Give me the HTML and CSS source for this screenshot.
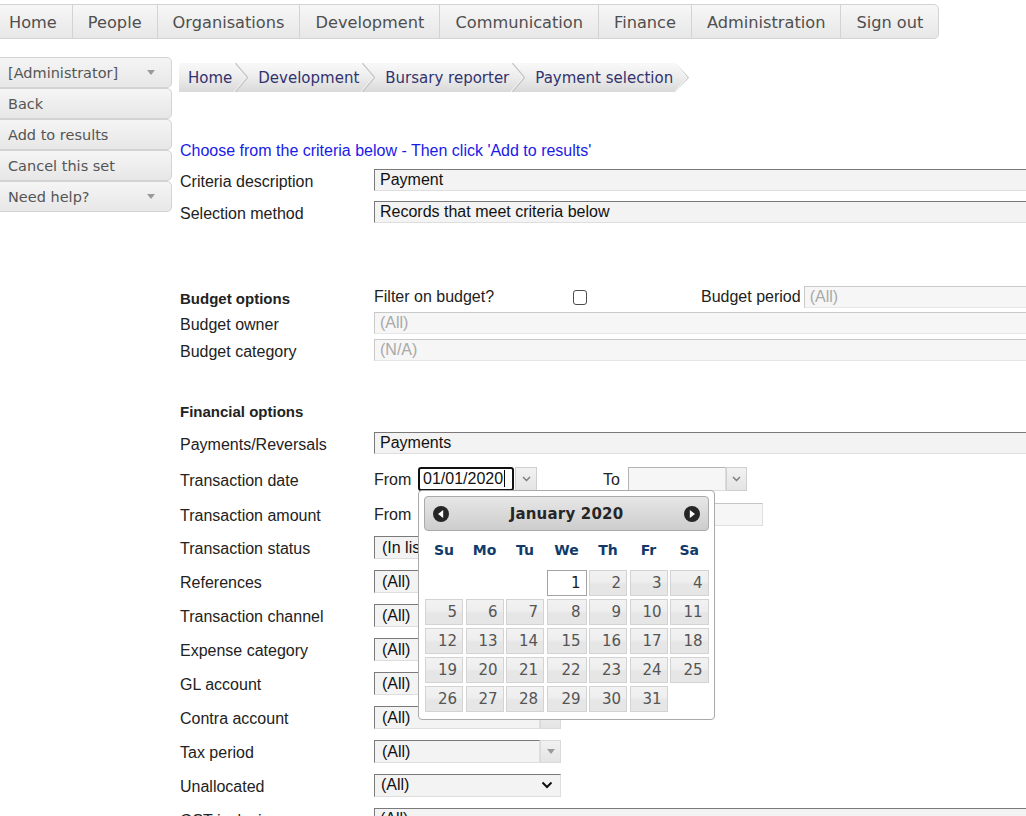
FILE: index.html
```html
<!DOCTYPE html>
<html lang="en">
<head>
<meta charset="utf-8">
<title>Payment selection</title>
<link rel="stylesheet" href="styles.css">
</head>
<body>
<nav class="topnav">
  <span class="nav-item">Home</span>
  <span class="nav-item">People</span>
  <span class="nav-item">Organisations</span>
  <span class="nav-item">Development</span>
  <span class="nav-item">Communication</span>
  <span class="nav-item">Finance</span>
  <span class="nav-item">Administration</span>
  <span class="nav-item">Sign out</span>
</nav>

<div class="page">
  <aside class="sidebar">
    <div class="side-item">[Administrator]<span class="caret"></span></div>
    <div class="side-item">Back</div>
    <div class="side-item">Add to results</div>
    <div class="side-item">Cancel this set</div>
    <div class="side-item">Need help?<span class="caret"></span></div>
  </aside>

  <main class="main">
    <div class="crumbs">
      <span class="crumb first">Home</span>
      <svg class="sep" viewBox="0 0 14 29" width="14" height="29"><polyline class="sep-light" points="0.2,0 12.7,14.5 0.2,29"/><polyline class="sep-dark" points="1.2,0 13.5,14.5 1.2,29"/></svg>
      <span class="crumb">Development</span>
      <svg class="sep" viewBox="0 0 14 29" width="14" height="29"><polyline class="sep-light" points="0.2,0 12.7,14.5 0.2,29"/><polyline class="sep-dark" points="1.2,0 13.5,14.5 1.2,29"/></svg>
      <span class="crumb">Bursary reporter</span>
      <svg class="sep" viewBox="0 0 14 29" width="14" height="29"><polyline class="sep-light" points="0.2,0 12.7,14.5 0.2,29"/><polyline class="sep-dark" points="1.2,0 13.5,14.5 1.2,29"/></svg>
      <span class="crumb">Payment selection</span>
      <svg class="sep" viewBox="0 0 14 29" width="14" height="29"><polyline class="sep-light" points="0.2,0 12.7,14.5 0.2,29"/><polyline class="sep-dark" points="1.2,0 13.5,14.5 1.2,29"/></svg>
    </div>

    <p class="intro">Choose from the criteria below - Then click 'Add to results'</p>

    <div class="form">
      <div class="row h32">
        <span class="lbl">Criteria description</span>
        <div class="field wide">Payment</div>
      </div>
      <div class="row h32">
        <span class="lbl">Selection method</span>
        <div class="field wide">Records that meet criteria below</div>
      </div>

      <div class="row h26 budget-first">
        <span class="lbl bold">Budget options</span>
        <span class="filter-text">Filter on budget?</span>
        <span class="checkbox"></span>
        <span class="period-text">Budget period</span>
        <div class="field disabled period-field">(All)</div>
      </div>
      <div class="row h26">
        <span class="lbl">Budget owner</span>
        <div class="field disabled wide">(All)</div>
      </div>
      <div class="row h28">
        <span class="lbl">Budget category</span>
        <div class="field disabled wide">(N/A)</div>
      </div>

      <div class="row h28 fin-head">
        <span class="lbl bold">Financial options</span>
      </div>
      <div class="row h34 pay-row">
        <span class="lbl">Payments/Reversals</span>
        <div class="field wide">Payments</div>
      </div>

      <div class="row h38">
        <span class="lbl">Transaction date</span>
        <span class="from">From</span>
        <div class="date-wrap">
          <div class="date-input focused">01/01/2020<span class="caret-line"></span></div>
          <span class="date-btn"><svg width="9" height="6" viewBox="0 0 9 6"><polyline points="1,1 4.5,4.5 8,1" fill="none" stroke="#7a7a7a" stroke-width="1.4"/></svg></span>

          <div class="calendar">
            <div class="cal-head">
              <svg class="cal-nav" width="16" height="16" viewBox="0 0 16 16"><circle cx="8" cy="8" r="8" fill="#262626"/><polygon points="10.2,4 5,8 10.2,12" fill="#fff"/></svg>
              <span class="cal-title">January 2020</span>
              <svg class="cal-nav" width="16" height="16" viewBox="0 0 16 16"><circle cx="8" cy="8" r="8" fill="#262626"/><polygon points="5.8,4 11,8 5.8,12" fill="#fff"/></svg>
            </div>
            <div class="cal-dow">
              <span>Su</span><span>Mo</span><span>Tu</span><span>We</span><span>Th</span><span>Fr</span><span>Sa</span>
            </div>
            <div class="cal-grid">
              <span class="blank"></span><span class="blank"></span><span class="blank"></span>
              <span class="day today">1</span><span class="day">2</span><span class="day">3</span><span class="day">4</span>
              <span class="day">5</span><span class="day">6</span><span class="day">7</span><span class="day">8</span><span class="day">9</span><span class="day">10</span><span class="day">11</span>
              <span class="day">12</span><span class="day">13</span><span class="day">14</span><span class="day">15</span><span class="day">16</span><span class="day">17</span><span class="day">18</span>
              <span class="day">19</span><span class="day">20</span><span class="day">21</span><span class="day">22</span><span class="day">23</span><span class="day">24</span><span class="day">25</span>
              <span class="day">26</span><span class="day">27</span><span class="day">28</span><span class="day">29</span><span class="day">30</span><span class="day">31</span>
            </div>
          </div>
        </div>
        <span class="to">To</span>
        <div class="date-input plain"></div>
        <span class="date-btn"><svg width="9" height="6" viewBox="0 0 9 6"><polyline points="1,1 4.5,4.5 8,1" fill="none" stroke="#7a7a7a" stroke-width="1.4"/></svg></span>
      </div>

      <div class="row h32">
        <span class="lbl">Transaction amount</span>
        <span class="from">From</span>
        <div class="amount-input"></div>
        <div class="amount-input to-input"></div>
      </div>

      <div class="row h34">
        <span class="lbl">Transaction status</span>
        <div class="combo"><div class="field cfield">(In list)</div><span class="combo-btn"><span class="tri"></span></span></div>
      </div>
      <div class="row h34">
        <span class="lbl">References</span>
        <div class="combo"><div class="field cfield">(All)</div><span class="combo-btn"><span class="tri"></span></span></div>
      </div>
      <div class="row h34">
        <span class="lbl">Transaction channel</span>
        <div class="combo"><div class="field cfield">(All)</div><span class="combo-btn"><span class="tri"></span></span></div>
      </div>
      <div class="row h34">
        <span class="lbl">Expense category</span>
        <div class="combo"><div class="field cfield">(All)</div><span class="combo-btn"><span class="tri"></span></span></div>
      </div>
      <div class="row h34">
        <span class="lbl">GL account</span>
        <div class="combo"><div class="field cfield">(All)</div><span class="combo-btn"><span class="tri"></span></span></div>
      </div>
      <div class="row h34">
        <span class="lbl">Contra account</span>
        <div class="combo"><div class="field cfield">(All)</div><span class="combo-btn"><span class="tri"></span></span></div>
      </div>
      <div class="row h34">
        <span class="lbl">Tax period</span>
        <div class="combo"><div class="field cfield">(All)</div><span class="combo-btn"><span class="tri"></span></span></div>
      </div>
      <div class="row h34">
        <span class="lbl">Unallocated</span>
        <div class="select">(All)<svg width="12" height="8" viewBox="0 0 12 8"><polyline points="1.5,1.5 6,6 10.5,1.5" fill="none" stroke="#111" stroke-width="2"/></svg></div>
      </div>
      <div class="row h34">
        <span class="lbl">GST inclusive</span>
        <div class="field wide">(All)</div>
      </div>
    </div>
  </main>
</div>
</body>
</html>
```

FILE: styles.css
```css
html, body {
  margin: 0;
  padding: 0;
  overflow: hidden;
  background: #fff;
}

body {
  font-family: "Liberation Sans", Arial, sans-serif;
  font-size: 16px;
  color: #222;
}

/* ---------- top navigation ---------- */
.topnav {
  display: flex;
  width: max-content;
  margin: 4px 0 0 -7px;
  border: 1px solid #d3d3d3;
  border-radius: 0 5px 5px 0;
  background: linear-gradient(#f7f7f7 0%, #efefef 50%, #e7e7e7 100%);
  font-family: "DejaVu Sans", Verdana, sans-serif;
  font-size: 16.2px;
  color: #4f4f4f;
}

.nav-item {
  box-sizing: border-box;
  height: 33px;
  padding: 2px 15px 0;
  line-height: 31px;
  border-right: 1px solid #d3d3d3;
}

.nav-item:last-child {
  border-right: 0;
}

/* ---------- page ---------- */
.page {
  display: flex;
  align-items: flex-start;
  margin-top: 18px;
}

.sidebar {
  flex: none;
  width: 173px;
  margin-left: -1px;
  font-family: "DejaVu Sans", Verdana, sans-serif;
  font-size: 14.5px;
  color: #555;
}

.side-item {
  display: flex;
  align-items: center;
  justify-content: space-between;
  height: 29px;
  padding: 0 16px 0 8px;
  border: 1px solid #d3d3d3;
  border-radius: 0 5px 5px 0;
  background: linear-gradient(#f5f5f5 0%, #eeeeee 50%, #e7e7e7 100%);
}

.caret {
  width: 0;
  height: 0;
  border-left: 4.5px solid transparent;
  border-right: 4.5px solid transparent;
  border-top: 5px solid #9a9a9a;
}

.main {
  flex: 1;
  min-width: 0;
  margin-left: 7px;
  padding-top: 6px;
}

/* ---------- breadcrumbs ---------- */
.crumbs {
  display: inline-flex;
  align-items: center;
  height: 29px;
  background: linear-gradient(#f9f9f9 0%, #ececec 50%, #d9d9d9 100%);
  clip-path: polygon(0 0, calc(100% - 14px) 0, 100% 50%, calc(100% - 14px) 100%, 0 100%);
  font-family: "DejaVu Sans", Verdana, sans-serif;
  font-size: 15px;
  color: #33336f;
}

.crumb {
  padding: 1px 2px 0 10px;
  white-space: nowrap;
}

.crumb.first {
  padding-left: 9px;
}

.sep {
  flex: none;
  display: block;
}

.sep-dark {
  fill: none;
  stroke: #c6c6c6;
  stroke-width: 1.3;
}

.sep-light {
  fill: none;
  stroke: #ffffff;
  stroke-width: 1.2;
}

/* ---------- form ---------- */
.intro {
  margin: 50px 0 4px 1px;
  line-height: 18px;
  color: #1a1ae8;
}

.form {
  margin-left: 1px;
}

.row {
  display: flex;
  align-items: center;
  white-space: nowrap;
}

.row > * {
  flex: none;
}

.h26 { height: 26px; }
.h28 { height: 28px; }
.h32 { height: 32px; }
.h34 { height: 34px; }
.h38 { height: 38px; }

.budget-first { margin-top: 56px; }
.fin-head { margin-top: 32px; }
.pay-row { margin-top: 2px; }

.lbl {
  width: 194px;
  padding-top: 4px;
}

.bold {
  font-weight: bold;
  font-size: 15px;
  padding-top: 2px;
}

.field {
  box-sizing: border-box;
  height: 22px;
  line-height: 20px;
  padding-left: 5px;
  border: 1px solid;
  border-color: #7a7a7a #dedede #dedede #7a7a7a;
  background: #f3f3f3;
  color: #111;
}

.field.wide {
  width: 720px;
}

.field.disabled {
  border-color: #c9c9c9 #e6e6e6 #e6e6e6 #c9c9c9;
  background: #f6f6f6;
  color: #a9a9a9;
}

.filter-text {
  width: 199px;
}

.checkbox {
  box-sizing: border-box;
  width: 14px;
  height: 15px;
  border: 1px solid #4d4d4d;
  border-radius: 3px;
  background: #fff;
}

.period-text {
  margin-left: 114px;
}

.period-field {
  width: 300px;
  margin-left: 3px;
}

/* date inputs */
.from {
  width: 44px;
  padding-top: 2px;
}

.date-wrap {
  position: relative;
  display: flex;
  align-items: center;
}

.date-input {
  box-sizing: border-box;
  height: 24px;
  line-height: 20px;
}

.date-input.focused {
  width: 96px;
  padding-left: 3px;
  border: 2px solid #111;
  border-radius: 3px;
  background: #fff;
  color: #111;
}

.caret-line {
  display: inline-block;
  width: 1px;
  height: 17px;
  margin-left: 1px;
  vertical-align: -3px;
  background: #000;
}

.date-input.plain {
  width: 98px;
  border: 1px solid;
  border-color: #b4b4b4 #dcdcdc #dcdcdc #b4b4b4;
  background: #f6f6f6;
}

.date-btn {
  box-sizing: border-box;
  display: flex;
  align-items: center;
  justify-content: center;
  width: 22px;
  height: 24px;
  margin-left: 1px;
  border: 1px solid #cfcfcf;
  background: linear-gradient(#f2f2f2, #e4e4e4);
}

.plain + .date-btn {
  margin-left: 0;
  width: 21px;
}

.to {
  margin-left: 66px;
  margin-right: 8px;
  padding-top: 2px;
}

.amount-input {
  box-sizing: border-box;
  width: 122px;
  height: 23px;
  border: 1px solid;
  border-color: #c4c4c4 #e0e0e0 #e0e0e0 #c4c4c4;
  background: #f6f6f6;
}

.amount-input.to-input {
  width: 134px;
  margin-left: 89px;
}

/* combos */
.combo {
  display: flex;
  align-items: stretch;
}

.cfield {
  width: 166px;
  height: 23px;
  padding-left: 7px;
  line-height: 21px;
}

.combo-btn {
  box-sizing: border-box;
  display: flex;
  align-items: center;
  justify-content: center;
  width: 21px;
  height: 23px;
  border: 1px solid #dadada;
  background: linear-gradient(#f1f1f1, #e4e4e4);
}

.tri {
  width: 0;
  height: 0;
  border-left: 4.5px solid transparent;
  border-right: 4.5px solid transparent;
  border-top: 5px solid #9a9a9a;
}

.select {
  box-sizing: border-box;
  display: flex;
  align-items: center;
  justify-content: space-between;
  width: 187px;
  height: 23px;
  padding: 0 7px 0 6px;
  border: 1px solid;
  border-color: #7a7a7a #dedede #dedede #7a7a7a;
  background: #f3f3f3;
  color: #111;
}

/* ---------- datepicker ---------- */
.calendar {
  position: absolute;
  left: 0;
  top: 23px;
  z-index: 10;
  box-sizing: border-box;
  width: 297px;
  height: 230px;
  padding: 5px;
  border: 1px solid #aaaaaa;
  border-radius: 4px;
  background: #fff;
  font-family: "DejaVu Sans", Verdana, sans-serif;
}

.cal-head {
  box-sizing: border-box;
  display: flex;
  align-items: center;
  height: 35px;
  padding: 0 8px;
  border: 1px solid #aaaaaa;
  border-radius: 4px;
  background: linear-gradient(#e6e6e6 0%, #dadada 50%, #cdcdcd 100%);
}

.cal-nav {
  flex: none;
  display: block;
}

.cal-title {
  flex: 1;
  text-align: center;
  font-weight: bold;
  font-size: 15px;
  color: #262626;
  letter-spacing: 0.2px;
}

.cal-dow,
.cal-grid {
  display: grid;
  grid-template-columns: 38px 38px 38px 40px 38px 38px 38.5px;
  column-gap: 2.5px;
  padding-left: 1px;
}

.cal-dow {
  height: 38px;
  align-items: center;
  font-weight: bold;
  font-size: 14px;
  color: #113a69;
  text-align: center;
}

.cal-grid {
  margin-top: 1px;
  row-gap: 3px;
}

.day {
  box-sizing: border-box;
  height: 26px;
  padding-right: 5px;
  border: 1px solid #d3d3d3;
  background: linear-gradient(#f2f2f2 0%, #eeeeee 45%, #e6e6e6 55%, #e6e6e6 100%);
  text-align: right;
  font-size: 15px;
  line-height: 24px;
  color: #555;
}

.day.today {
  border-color: #a3a3a3;
  background: #fff;
  color: #1e1e1e;
}
```
